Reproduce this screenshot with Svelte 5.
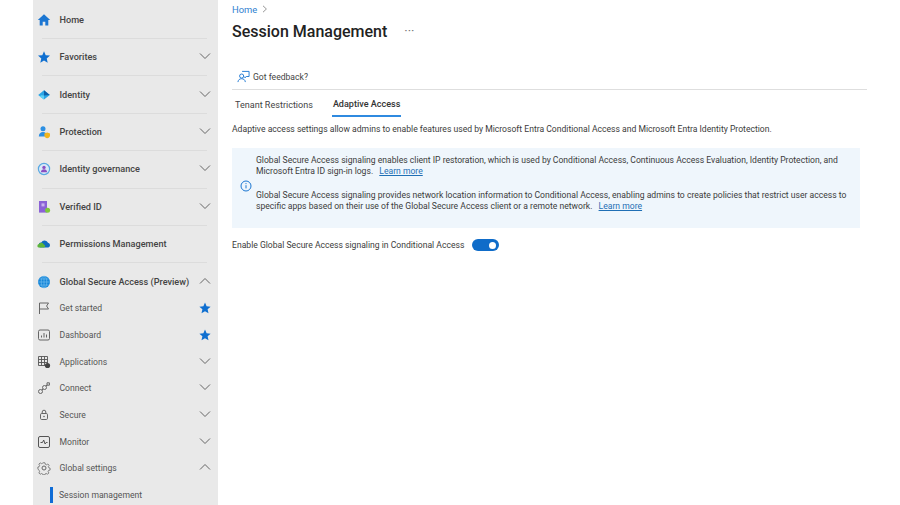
<script>
  const top = [
    { label: 'Home', icon: 'home' },
    { label: 'Favorites', icon: 'star', chev: 'down' },
    { label: 'Identity', icon: 'identity', chev: 'down' },
    { label: 'Protection', icon: 'protection', chev: 'down' },
    { label: 'Identity governance', icon: 'governance', chev: 'down' },
    { label: 'Verified ID', icon: 'verified', chev: 'down' },
    { label: 'Permissions Management', icon: 'permissions' }
  ];
  const sub = [
    { label: 'Get started', icon: 'flag', fav: true },
    { label: 'Dashboard', icon: 'dashboard', fav: true },
    { label: 'Applications', icon: 'apps', chev: 'down' },
    { label: 'Connect', icon: 'connect', chev: 'down' },
    { label: 'Secure', icon: 'lock', chev: 'down' },
    { label: 'Monitor', icon: 'monitor', chev: 'down' },
    { label: 'Global settings', icon: 'gear', chev: 'up' }
  ];
</script>

{#snippet chevron(dir)}
  <svg class="chev" width="12" height="8" viewBox="0 0 12 8">
    <path d={dir === 'up' ? 'M1 6.5 L6 1.5 L11 6.5' : 'M1 1.5 L6 6.5 L11 1.5'} fill="none" stroke="#666" stroke-width="1" />
  </svg>
{/snippet}

{#snippet star(size)}
  <svg width={size} height={size} viewBox="0 0 12 12">
    <path d="M6 .6 7.6 4.3 11.6 4.7 8.6 7.3 9.5 11.3 6 9.2 2.5 11.3 3.4 7.3 .4 4.7 4.4 4.3Z" fill="#0f6fd0" />
  </svg>
{/snippet}

{#snippet icon(name)}
  <svg class="ico" width="14" height="14" viewBox="0 0 14 14">
    {#if name === 'home'}
      <path d="M7 1.2 .8 7h1.9v5.6h3V8.8h2.6v3.8h3V7h1.9Z" fill="#1b76d2" />
    {:else if name === 'star'}
      <path d="M7 1.2 8.7 5.2 13 5.6 9.7 8.4 10.7 12.7 7 10.4 3.3 12.7 4.3 8.4 1 5.6 5.3 5.2Z" fill="#0f6fd0" />
    {:else if name === 'identity'}
      <path d="M7 2.2 12.8 7 7 11.6 1.2 7Z" fill="#2aa5e6" />
      <path d="M7 2.2 12.8 7 7 7.6Z" fill="#0c5fa8" />
      <path d="M4.2 7.2 7 7.6 7 11.6 2.6 8.4Z" fill="#5fd0f5" />
    {:else if name === 'protection'}
      <circle cx="6" cy="3.8" r="2.5" fill="#2b8fe3" />
      <path d="M1.8 11.6c0-3 1.8-4.6 4.2-4.6s4.2 1.6 4.2 4.6Z" fill="#2b8fe3" />
      <path d="M10.2 7.4 13 8.4v2c0 1.4-1.2 2.3-2.8 2.9-1.6-.6-2.8-1.5-2.8-2.9v-2Z" fill="#f2b51d" />
    {:else if name === 'governance'}
      <circle cx="7" cy="7" r="5.6" fill="#d9e8f7" stroke="#58a8e2" stroke-width="1.2" />
      <circle cx="7" cy="5.4" r="1.7" fill="#8a4fc2" />
      <path d="M3.9 10.2c0-2 1.4-3 3.1-3s3.1 1 3.1 3Z" fill="#8a4fc2" />
    {:else if name === 'verified'}
      <rect x="2" y="1" width="8" height="11.6" fill="#8b62d6" />
      <rect x="4.5" y="3.4" width="3" height="3" fill="#c9b3ee" />
      <circle cx="10.6" cy="10.2" r="2.5" fill="#7ec83c" />
    {:else if name === 'permissions'}
      <path d="M4 10.6a2.5 2.5 0 0 1 .3-5A3.6 3.6 0 0 1 11 5.8a2.5 2.5 0 0 1 .4 4.8Z" fill="#0f6cbd" />
      <path d="M1.6 10.6a1.8 1.8 0 0 1 .4-3.5 2.6 2.6 0 0 1 4.8.4 1.6 1.6 0 0 1 .2 3.1Z" fill="#5db53a" />
    {:else if name === 'globe'}
      <circle cx="7" cy="7" r="6" fill="#1585d8" />
      <path d="M7 1v12M1 7h12M2.4 4h9.2M2.4 10h9.2" stroke="#7cc4f2" stroke-width=".6" fill="none" />
      <ellipse cx="7" cy="7" rx="2.8" ry="6" fill="none" stroke="#7cc4f2" stroke-width=".6" />
    {:else if name === 'flag'}
      <path d="M2.5 13V2h9L9.6 5 11.5 8h-9" fill="none" stroke="#666" stroke-width="1" />
    {:else if name === 'dashboard'}
      <rect x="1.5" y="2" width="11" height="10" rx="1.5" fill="none" stroke="#666" stroke-width="1" />
      <path d="M4.5 9.5V7.5M7 9.5V5M9.5 9.5V6.5" stroke="#666" stroke-width="1" fill="none" />
    {:else if name === 'apps'}
      <path d="M1.5 1.5h9v9h-9ZM1.5 4.5h9M1.5 7.5h9M4.5 1.5v9M7.5 1.5v9" fill="none" stroke="#555" stroke-width=".9" />
      <circle cx="10.5" cy="10.5" r="2.6" fill="#444" />
    {:else if name === 'connect'}
      <circle cx="3.5" cy="10.5" r="2" fill="none" stroke="#666" stroke-width="1" />
      <circle cx="7.5" cy="6.5" r="2" fill="none" stroke="#666" stroke-width="1" />
      <path d="M5 9 6 8M9 5l1.2-1.2M10 1.8h2.4v2.4h-2.4Z" fill="none" stroke="#666" stroke-width="1" />
    {:else if name === 'lock'}
      <rect x="3.5" y="5.5" width="7" height="6" rx="1.2" fill="none" stroke="#666" stroke-width="1" />
      <path d="M5.2 5.5V4a1.8 1.8 0 0 1 3.6 0v1.5" fill="none" stroke="#666" stroke-width="1" />
      <circle cx="7" cy="8.5" r=".8" fill="#666" />
    {:else if name === 'monitor'}
      <rect x="1.5" y="1.5" width="11" height="11" rx="1.5" fill="none" stroke="#555" stroke-width="1" />
      <path d="M3.5 7.5h2l1.2-2.5 1.4 4 1-1.5h1.4" fill="none" stroke="#555" stroke-width="1" />
    {:else if name === 'gear'}
      <circle cx="7" cy="7" r="2" fill="none" stroke="#666" stroke-width="1" />
      <path d="M5.9 1h2.2l.4 1.7 1.4.6 1.5-.9 1.5 1.5-.9 1.5.6 1.4 1.4.4v2.2l-1.7.4-.6 1.4.9 1.5-1.5 1.5-1.5-.9-1.4.6-.4 1.1H5.9l-.4-1.1-1.4-.6-1.5.9-1.5-1.5.9-1.5-.6-1.4L0 8.1V5.9l1.4-.4.6-1.4-.9-1.5 1.5-1.5 1.5.9 1.4-.6Z" fill="none" stroke="#666" stroke-width=".9" transform="translate(.9 .9) scale(.87)" />
    {/if}
  </svg>
{/snippet}

<div class="page">
  <nav class="sidebar">
    {#each top as item}
      <div class="row">
        {@render icon(item.icon)}
        <span class="label">{item.label}</span>
        {#if item.chev}{@render chevron(item.chev)}{/if}
      </div>
    {/each}
    <div class="row group">
      {@render icon('globe')}
      <span class="label">Global Secure Access (Preview)</span>
      {@render chevron('up')}
    </div>
    {#each sub as item}
      <div class="subrow">
        {@render icon(item.icon)}
        <span class="label">{item.label}</span>
        {#if item.chev}{@render chevron(item.chev)}{/if}
        {#if item.fav}<span class="fav">{@render star(12)}</span>{/if}
      </div>
    {/each}
    <div class="subrow active">
      <span class="bar"></span>
      <span class="label">Session management</span>
    </div>
  </nav>

  <main class="main">
    <div class="crumb">
      <span>Home</span>
      <svg width="6" height="8" viewBox="0 0 6 8"><path d="M1 .8 4.4 4 1 7.2" fill="none" stroke="#8a8a8a" stroke-width=".9" /></svg>
    </div>
    <div class="title">
      <h1>Session Management</h1>
      <span class="more">···</span>
    </div>
    <div class="feedback">
      <svg width="13" height="13" viewBox="0 0 14 14">
        <circle cx="5" cy="6.5" r="2.2" fill="none" stroke="#1b76d2" stroke-width="1" />
        <path d="M1 13c.3-2.4 1.8-3.6 4-3.6s3.7 1.2 4 3.6M5.5 1.5h7.5v5.5H10L8.5 8.5V7" fill="none" stroke="#1b76d2" stroke-width="1" />
      </svg>
      <span>Got feedback?</span>
    </div>
    <div class="tabs">
      <span class="tab">Tenant Restrictions</span>
      <span class="tab selected">Adaptive Access</span>
    </div>
    <p class="desc">Adaptive access settings allow admins to enable features used by Microsoft Entra Conditional Access and Microsoft Entra Identity Protection.</p>
    <div class="info">
      <svg class="info-ico" width="12" height="12" viewBox="0 0 12 12">
        <circle cx="6" cy="6" r="5" fill="none" stroke="#1b76d2" stroke-width="1" />
        <path d="M6 5.2v3.2" stroke="#1b76d2" stroke-width="1" />
        <circle cx="6" cy="3.6" r=".6" fill="#1b76d2" />
      </svg>
      <div class="info-text">
        <p>Global Secure Access signaling enables client IP restoration, which is used by Conditional Access, Continuous Access Evaluation, Identity Protection, and Microsoft Entra ID sign-in logs. <a href="#top">Learn more</a></p>
        <p>Global Secure Access signaling provides network location information to Conditional Access, enabling admins to create policies that restrict user access to specific apps based on their use of the Global Secure Access client or a remote network. <a href="#top">Learn more</a></p>
      </div>
    </div>
    <div class="toggle-row">
      <span>Enable Global Secure Access signaling in Conditional Access</span>
      <span class="toggle"><span class="knob"></span></span>
    </div>
  </main>
</div>

<style>
  :global(body) {
    margin: 0;
    background: #fff;
    font-family: Roboto, "Open Sans", sans-serif;
    color: #3b3b3b;
  }
  .page {
    display: flex;
    width: 900px;
    height: 505px;
    overflow: hidden;
    padding-left: 33px;
    box-sizing: border-box;
  }
  .sidebar {
    width: 185px;
    flex: none;
    background: #e9e9e9;
    padding-top: 1.6px;
    box-sizing: border-box;
    overflow: hidden;
  }
  .row {
    display: flex;
    align-items: center;
    height: 37.4px;
    box-sizing: border-box;
    margin: 0 11px 0 9px;
    font-size: 9.15px;
    font-weight: 500;
    color: #444;
    border-bottom: 1px solid #dcdcdc;
  }
  .row.group {
    height: 31.6px;
    padding-top: 5px;
    border-bottom: none;
  }
  .ico {
    margin-left: -5px;
    flex: none;
  }
  .row .label {
    margin-left: 8.5px;
    flex: 1;
    white-space: nowrap;
  }
  .chev {
    flex: none;
    margin-right: -4px;
    margin-top: -2px;
  }
  .subrow {
    display: flex;
    align-items: center;
    height: 26.7px;
    margin: 0 11px 0 9px;
    font-size: 8.6px;
    color: #555;
    position: relative;
  }
  .subrow .label {
    margin-left: 8.5px;
    flex: 1;
    white-space: nowrap;
  }
  .fav {
    display: flex;
    margin-right: -4px;
  }
  .subrow.active .label {
    margin-left: 17px;
  }
  .bar {
    position: absolute;
    left: 8px;
    top: 5px;
    width: 3px;
    height: 16px;
    background: #0f6cd6;
  }
  .main {
    flex: 1;
    padding: 0 33px 0 14px;
    min-width: 0;
  }
  .crumb {
    display: flex;
    align-items: center;
    gap: 5px;
    height: 18px;
    font-size: 9.4px;
    color: #2f80d0;
  }
  .title {
    display: flex;
    align-items: center;
    height: 26px;
  }
  h1 {
    margin: 0;
    font-size: 16px;
    font-weight: 500;
    color: #222;
  }
  .more {
    margin-left: 17px;
    font-size: 13px;
    color: #777;
    margin-top: -2px;
  }
  .feedback {
    display: flex;
    align-items: center;
    gap: 3px;
    height: 45.5px;
    padding: 21px 0 0 5px;
    box-sizing: border-box;
    font-size: 8.6px;
    color: #444;
    border-bottom: 1.5px solid #dedede;
  }
  .tabs {
    display: flex;
    height: 27.5px;
    gap: 19px;
    padding-left: 3px;
    font-size: 9.05px;
  }
  .tab {
    display: flex;
    align-items: center;
    padding-top: 4px;
    box-sizing: border-box;
    color: #444;
  }
  .tab.selected {
    font-weight: 500;
    color: #333;
    border-bottom: 2px solid #2f8ae0;
    padding: 4px 1px 0;
  }
  .desc {
    margin: 6px 0 0;
    line-height: 12px;
    font-size: 8.6px;
    color: #3b3b3b;
    white-space: nowrap;
  }
  .info {
    display: flex;
    align-items: center;
    width: 628px;
    height: 80px;
    margin-top: 13px;
    box-sizing: border-box;
    background: #eff6fc;
    padding: 0 0 7px 8px;
  }
  .info-ico {
    flex: none;
    margin-right: 4px;
    margin-top: 3px;
  }
  .info-text {
    margin-top: -2px;
  }
  .info-text p {
    margin: 0 0 13px;
    font-size: 8.6px;
    line-height: 11px;
    width: 592px;
  }
  .info-text p:last-child {
    margin-bottom: 0;
  }
  a {
    color: #1f6fb5;
    margin-left: 4px;
  }
  .toggle-row {
    display: flex;
    align-items: center;
    gap: 8px;
    height: 14px;
    margin-top: 10px;
    font-size: 8.6px;
  }
  .toggle {
    width: 27px;
    height: 12px;
    border-radius: 6px;
    background: #0f6cc9;
    position: relative;
  }
  .knob {
    position: absolute;
    right: 3px;
    top: 2.5px;
    width: 7px;
    height: 7px;
    border-radius: 50%;
    background: #fff;
  }
</style>
